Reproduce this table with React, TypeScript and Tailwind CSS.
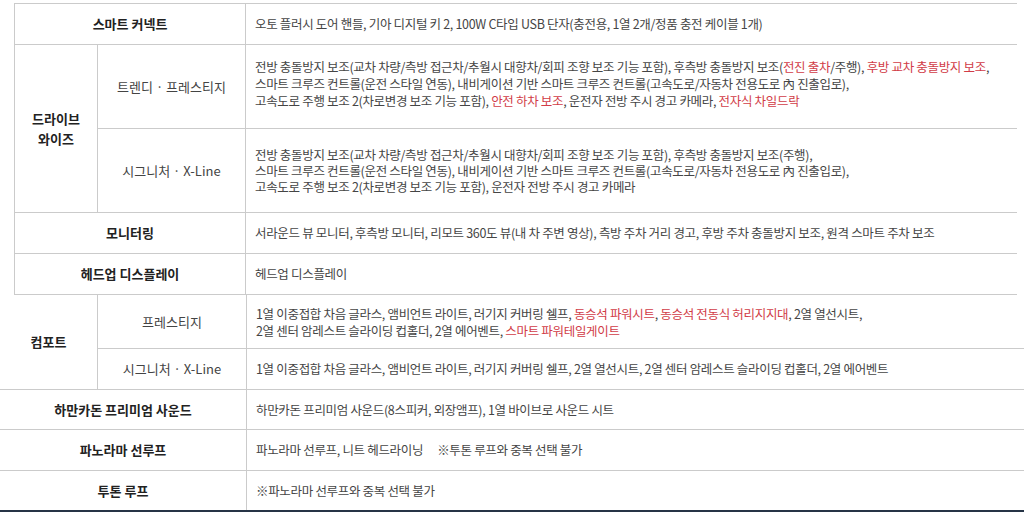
import React from "react";

const red = "text-[#d13c47]";

function R({ children }: { children: React.ReactNode }) {
  return <span className={red}>{children}</span>;
}

const label =
  "flex items-center justify-center text-center font-bold text-[13px] text-[#222] border-r border-b border-[#cbcbcb]";
const sub =
  "flex items-center justify-center text-center text-[13px] text-[#444] border-r border-b border-[#cbcbcb]";
const content =
  "flex items-center pl-[9px] text-[12.5px] leading-[16px] text-[#454545] tracking-[-0.32px] border-b border-[#cbcbcb]";

export default function App() {
  return (
    <div
      className="w-[1024px] h-[512px] bg-white overflow-hidden"
      style={{ fontFamily: '"Noto Sans CJK KR", "Noto Sans", sans-serif' }}
    >
      <div className="pt-[3px]">
        <div className="ml-[14px] w-[1003px] grid grid-cols-[83px_148px_1fr] grid-rows-[41px_84px_84px_41px_41px] border-l border-t border-[#cbcbcb]">
          <div className={`${label} col-span-2`}>스마트 커넥트</div>
          <div className={content}>
            오토 플러시 도어 핸들, 기아 디지털 키 2, 100W C타입 USB 단자(충전용, 1열 2개/정품 충전 케이블 1개)
          </div>

          <div className={`${label} row-span-2`}>
            드라이브
            <br />
            와이즈
          </div>
          <div className={sub}>트렌디 · 프레스티지</div>
          <div className={`${content} leading-[17px] pb-[6px]`}>
            <p className="whitespace-nowrap">
              전방 충돌방지 보조(교차 차량/측방 접근차/추월시 대향차/회피 조향 보조 기능 포함), 후측방 충돌방지 보조(
              <R>전진 출차</R>/주행), <R>후방 교차 충돌방지 보조</R>,
              <br />
              스마트 크루즈 컨트롤(운전 스타일 연동), 내비게이션 기반 스마트 크루즈 컨트롤(고속도로/자동차 전용도로 內 진출입로),
              <br />
              고속도로 주행 보조 2(차로변경 보조 기능 포함), <R>안전 하차 보조</R>, 운전자 전방 주시 경고 카메라,{" "}
              <R>전자식 차일드락</R>
            </p>
          </div>

          <div className={sub}>시그니처 · X-Line</div>
          <div className={content}>
            <p>
              전방 충돌방지 보조(교차 차량/측방 접근차/추월시 대향차/회피 조향 보조 기능 포함), 후측방 충돌방지 보조(주행),
              <br />
              스마트 크루즈 컨트롤(운전 스타일 연동), 내비게이션 기반 스마트 크루즈 컨트롤(고속도로/자동차 전용도로 內 진출입로),
              <br />
              고속도로 주행 보조 2(차로변경 보조 기능 포함), 운전자 전방 주시 경고 카메라
            </p>
          </div>

          <div className={`${label} col-span-2`}>모니터링</div>
          <div className={content}>
            서라운드 뷰 모니터, 후측방 모니터, 리모트 360도 뷰(내 차 주변 영상), 측방 주차 거리 경고, 후방 주차 충돌방지 보조, 원격 스마트 주차 보조
          </div>

          <div className={`${label} col-span-2`}>헤드업 디스플레이</div>
          <div className={content}>헤드업 디스플레이</div>
        </div>
      </div>

      <div className="w-[1024px] grid grid-cols-[98px_149px_1fr] grid-rows-[54px_41px_40px_41px_39px]">
        <div className={`${label} row-span-2`}>컴포트</div>
        <div className={sub}>프레스티지</div>
        <div className={`${content} leading-[17px]`}>
          <p>
            1열 이중접합 차음 글라스, 앰비언트 라이트, 러기지 커버링 쉘프, <R>동승석 파워시트</R>,{" "}
            <R>동승석 전동식 허리지지대</R>, 2열 열선시트,
            <br />
            2열 센터 암레스트 슬라이딩 컵홀더, 2열 에어벤트, <R>스마트 파워테일게이트</R>
          </p>
        </div>

        <div className={sub}>시그니처 · X-Line</div>
        <div className={content}>
          1열 이중접합 차음 글라스, 앰비언트 라이트, 러기지 커버링 쉘프, 2열 열선시트, 2열 센터 암레스트 슬라이딩 컵홀더, 2열 에어벤트
        </div>

        <div className={`${label} col-span-2`}>하만카돈 프리미엄 사운드</div>
        <div className={content}>하만카돈 프리미엄 사운드(8스피커, 외장앰프), 1열 바이브로 사운드 시트</div>

        <div className={`${label} col-span-2`}>파노라마 선루프</div>
        <div className={content}>
          파노라마 선루프, 니트 헤드라이닝<span className="ml-[14px]">※투톤 루프와 중복 선택 불가</span>
        </div>

        <div className={`${label} col-span-2 !border-b-0`}>투톤 루프</div>
        <div className={`${content} !border-b-0`}>※파노라마 선루프와 중복 선택 불가</div>
      </div>
      <div className="h-[4px] bg-[#263446]" />
    </div>
  );
}
